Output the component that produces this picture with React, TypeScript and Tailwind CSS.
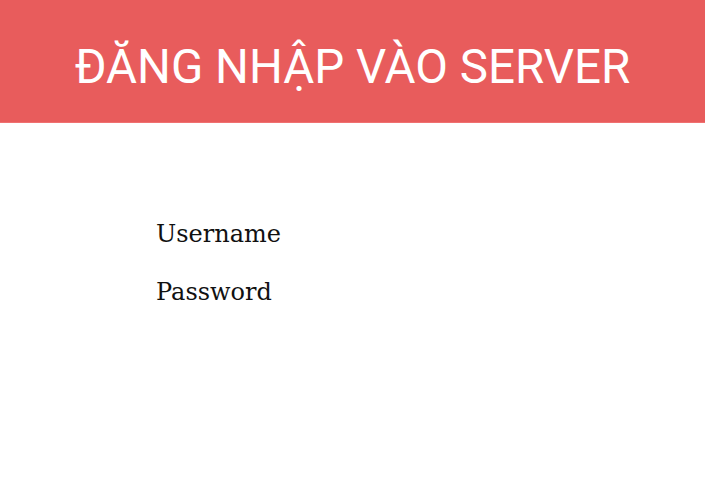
export default function App() {
  return (
    <main className="min-h-screen bg-white">
      <header className="flex h-[123px] items-center justify-center border-b border-[#f07070] bg-[#e85c5c] pt-[14px]">
        <h1 className="text-[47.5px] font-normal leading-none text-white [font-family:'Roboto','Open_Sans',sans-serif]">
          ĐĂNG NHẬP VÀO SERVER
        </h1>
      </header>
      <form className="flex flex-col gap-[30px] pl-[156px] pt-[97px] text-[24px] leading-[28px] text-[#111] [font-family:'DejaVu_Serif',serif]">
        <label>Username</label>
        <label>Password</label>
      </form>
    </main>
  );
}
